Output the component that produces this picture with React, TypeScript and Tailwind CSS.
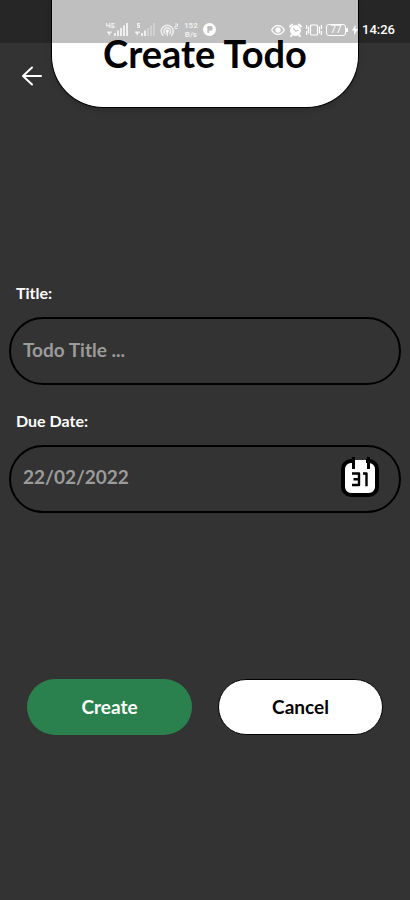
import { useState } from "react";

function SignalIcon({ tag, faded }: { tag: string; faded?: boolean }) {
  return (
    <svg width="22" height="14" viewBox="0 0 22 14" fill="currentColor" aria-hidden="true">
      {tag === "4G" ? (
        <path d="M0 0h1.200v2h2V0h1.200v5H3.200V3.200H0zM5.400 0h3v1.200H6.600v2.600h.8V2.500h1.200V5H5.400zM1 8.500h5v1.200H4.600l-1.200 3-2-3H1z" />
      ) : (
        <path d="M4 0h3v1.200H5.200v.8H7v3H4V3.800h1.800v-.7H4zM2 8.500h5v1.200H5.600l-1.200 3-2-3H2z" />
      )}
      <path d="M8 10h2v3H8zM11 7.500h2V13h-2z" />
      <path d="M14 5h2v8h-2zM17 2.500h2V13h-2zM20 0h2v13h-2z" opacity={faded ? 0.35 : 1} />
    </svg>
  );
}

function HotspotIcon() {
  return (
    <svg width="19" height="14" viewBox="0 0 19 14" fill="none" stroke="currentColor" strokeWidth="1.500" strokeLinecap="round" aria-hidden="true">
      <path d="M3 12.500a6 6 0 1 1 8.500 0" />
      <path d="M5 10.500a3.300 3.300 0 1 1 4.600 0" />
      <circle cx="7.300" cy="8" r="1" fill="currentColor" />
      <path d="M7.300 8v4.500" />
      <path d="M15 1h2.500v2.200H15v2.300h2.500" strokeWidth="1" strokeLinecap="butt" />
    </svg>
  );
}

function AppIcon() {
  return (
    <svg width="13" height="13" viewBox="0 0 12 12" aria-hidden="true">
      <circle cx="6" cy="6" r="6" fill="currentColor" />
      <path d="M4 2.800h2.800a2.200 2.200 0 0 1 0 4.400H5.600v2H4z" fill="#bdbdbd" />
    </svg>
  );
}

function EyeIcon() {
  return (
    <svg width="14" height="12" viewBox="0 0 14 12" fill="none" stroke="currentColor" strokeWidth="1.300" aria-hidden="true">
      <path d="M.7 6C3.500 .2 10.500 .2 13.300 6 10.500 11.800 3.500 11.800 .7 6z" />
      <circle cx="7" cy="6" r="2" fill="currentColor" />
    </svg>
  );
}

function AlarmIcon() {
  return (
    <svg width="13" height="14" viewBox="0 0 13 14" fill="none" stroke="currentColor" strokeLinecap="round" aria-hidden="true">
      <circle cx="6.500" cy="7.500" r="5" fill="currentColor" />
      <path d="M1 3.500 3.200 1.500M12 3.500 9.800 1.500M3 12l-1 1.200M10 12l1 1.200" strokeWidth="1.800" />
      <path d="M4.500 5.500 6.500 8l2.500-.5" stroke="#bdbdbd" strokeWidth="1.200" />
    </svg>
  );
}

function VibrateIcon() {
  return (
    <svg width="16" height="12" viewBox="0 0 16 12" fill="none" stroke="currentColor" strokeWidth="1.200" aria-hidden="true">
      <rect x="4.500" y="1" width="7" height="10" rx="1" />
      <path d="M2.500 2.500v7M.6 1v4M.6 7v4M13.500 2.500v7M15.400 1v4M15.400 7v4" />
    </svg>
  );
}

function BoltIcon() {
  return (
    <svg width="6" height="10" viewBox="0 0 6 10" fill="currentColor" aria-hidden="true">
      <path d="M3.500 0 0 5.500h2.300L2 10l4-6H3.500z" />
    </svg>
  );
}

function StatusBar() {
  return (
    <div className="pointer-events-none absolute inset-x-0 top-0 flex h-[43px] items-center justify-between bg-black/25 pt-4 pr-[15px] pl-[106px] font-[Roboto,sans-serif] text-white">
      <div className="flex items-center gap-[5px] text-white/75">
        <SignalIcon tag="4G" />
        <SignalIcon tag="E" faded />
        <HotspotIcon />
        <div className="text-center text-[8px] leading-[9px]">
          <div>152</div>
          <div>B/s</div>
        </div>
        <span className="text-white">
          <AppIcon />
        </span>
      </div>
      <div className="flex items-center gap-1">
        <EyeIcon />
        <AlarmIcon />
        <VibrateIcon />
        <div className="flex items-center">
          <span className="flex h-3 w-5 items-center justify-center rounded-[3px] border border-white text-[10px] leading-none font-normal">
            77
          </span>
          <span className="h-1 w-[2px] bg-white" />
        </div>
        <BoltIcon />
        <span className="text-[13px] leading-4 font-medium">14:26</span>
      </div>
    </div>
  );
}

function CalendarIcon() {
  return (
    <svg width="38" height="42" viewBox="0 0 38 42" fill="none" aria-hidden="true">
      <rect x="2" y="5" width="34" height="34" rx="8" fill="#fff" stroke="#000" strokeWidth="4" />
      <path d="M14 5h11" stroke="#fff" strokeWidth="4" />
      <path d="M14 3h11" stroke="#333" strokeWidth="2" />
      <path d="M12.500 1v12M27.500 1v12" stroke="#000" strokeWidth="3" />
      <path d="M11 17.500h7V29h-7M12.500 23.200H18M22 17.500h3.500v12.700" stroke="#000" strokeWidth="2.400" strokeLinejoin="round" />
    </svg>
  );
}

export default function App() {
  const [title, setTitle] = useState("");
  const [dueDate, setDueDate] = useState("22/02/2022");

  return (
    <div className="relative flex min-h-screen flex-col bg-[#333333] font-[Lato,sans-serif] font-bold">
      <header className="grid grid-cols-[1fr_6fr_1fr]">
        <div className="flex items-end justify-end pr-2 pb-5">
          <button type="button" aria-label="Go back" className="text-white">
            <svg width="22" height="24" viewBox="0 0 22 24" fill="none" stroke="currentColor" strokeWidth="2" strokeLinecap="round" strokeLinejoin="round">
              <path d="M20 12H2M11 3.500 2 12l9 8.500" />
            </svg>
          </button>
        </div>
        <div className="rounded-b-[52px] border border-t-0 border-black bg-white pt-[37px] pb-[38px] text-center shadow-md">
          <h1 className="text-[38px] leading-8 font-bold text-black">Create Todo</h1>
        </div>
      </header>

      <form className="flex flex-col px-[9px] pt-[173px]" onSubmit={(e) => e.preventDefault()}>
        <label htmlFor="title" className="px-[7px] text-base leading-6 text-white">
          Title:
        </label>
        <input
          id="title"
          type="text"
          value={title}
          onChange={(e) => setTitle(e.target.value)}
          placeholder="Todo Title ..."
          className="mt-3 h-[68px] w-full rounded-full border-2 border-black bg-transparent px-3 pb-1 text-[19px] text-[#9b9b9b] outline-none placeholder:text-[#9b9b9b]"
        />

        <label htmlFor="due-date" className="mt-6 px-[7px] text-base leading-6 text-white">
          Due Date:
        </label>
        <div className="mt-3 flex h-[68px] items-center rounded-full border-2 border-black pr-5 pb-1 pl-3">
          <input
            id="due-date"
            type="text"
            value={dueDate}
            onChange={(e) => setDueDate(e.target.value)}
            className="min-w-0 flex-1 bg-transparent text-[19px] text-[#9b9b9b] outline-none"
          />
          <button type="button" aria-label="Pick a date">
            <CalendarIcon />
          </button>
        </div>

        <div className="mt-[166px] grid grid-cols-2 gap-[26px] px-[18px] pb-8">
          <button type="submit" className="h-14 rounded-full bg-[#2b814d] text-[19px] text-white">
            Create
          </button>
          <button type="button" className="h-14 rounded-full border border-black bg-white text-[19px] text-black">
            Cancel
          </button>
        </div>
      </form>

      <StatusBar />
    </div>
  );
}
